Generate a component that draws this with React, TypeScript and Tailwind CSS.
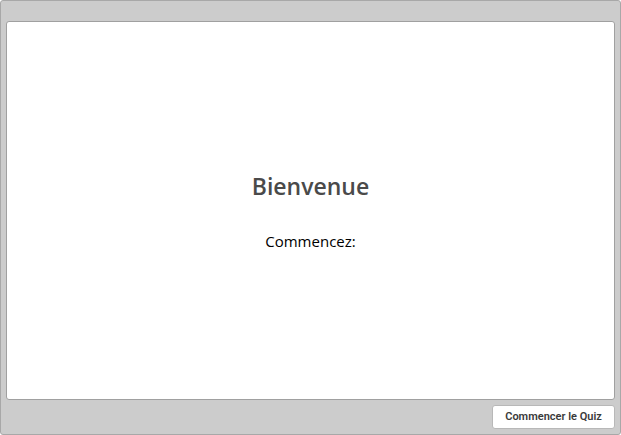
export default function App() {
    return (
        <div className="w-[621px] h-[435px] bg-[#cccccc] border border-[#a8a8a8] rounded-[3px] flex flex-col px-[5px] pt-[20px] font-['Open_Sans',sans-serif]">
            <div className="h-[379px] bg-white border border-[#a0a0a0] rounded-[3px] flex flex-col items-center justify-center">
                <h1 className="text-[23px] leading-[30px] font-semibold text-[#4a4a4a]">Bienvenue</h1>
                <p className="mt-[30px] text-[15px] leading-[20px] text-black">Commencez:</p>
            </div>
            <div className="flex justify-end mt-[5px]">
                <button className="w-[123px] h-[24px] bg-white border border-[#b8b8b8] rounded-[3px] text-[11px] font-semibold text-[#3a3a3a] font-['Roboto',Arial,sans-serif]">
                    Commencer le Quiz
                </button>
            </div>
        </div>
    );
}
